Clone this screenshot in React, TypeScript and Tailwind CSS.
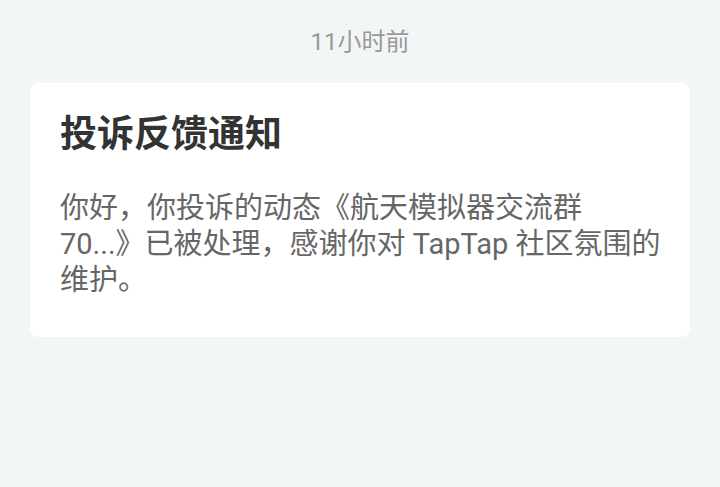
export default function App() {
  return (
    <div
      className="w-[720px] h-[487px] bg-[#f3f6f6] flex flex-col items-center"
      style={{ fontFamily: 'Roboto, "Noto Sans CJK SC", sans-serif' }}
    >
      <div className="pt-[26px] text-[24px] leading-[32px] text-[#999999]">11小时前</div>
      <div className="mt-[25px] w-[660px] bg-white rounded-[8px] pl-[30px] pr-[20px] pt-[30px] pb-[39px]">
        <div className="text-[37px] leading-[44px] font-bold text-[#333333]">投诉反馈通知</div>
        <div className="mt-[33px] text-[29px] leading-[36px] text-[#666666]">
          你好，你投诉的动态《航天模拟器交流群
          <br />
          70...》已被处理，感谢你对 TapTap 社区氛围的维护。
        </div>
      </div>
    </div>
  );
}
